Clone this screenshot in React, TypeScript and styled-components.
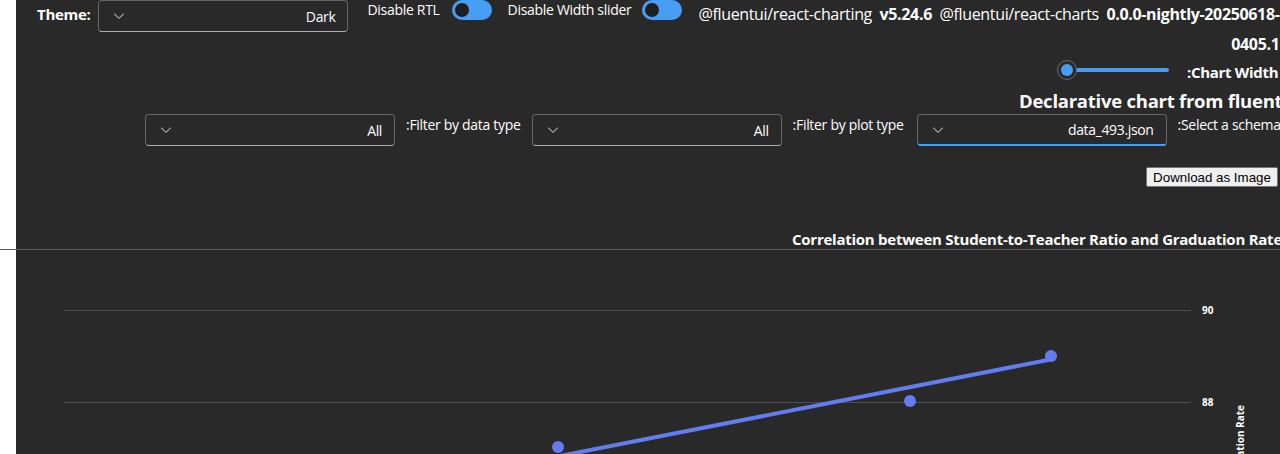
import React from "react";
import styled, { createGlobalStyle } from "styled-components";

const Global = createGlobalStyle`
  html, body { margin: 0; padding: 0; background: #ffffff; }
  body { font-family: "Segoe UI", "Open Sans", sans-serif; }
  #root { width: 1280px; height: 454px; }
`;

const Viewport = styled.div`
  width: 1280px;
  height: 454px;
  overflow: hidden;
  position: relative;
`;

const Page = styled.div`
  margin-left: 16px;
  height: 454px;
  background: #292929;
  color: #ffffff;
  font-family: "Segoe UI", "Open Sans", sans-serif;
`;

const TopRow = styled.div`
  display: flex;
  align-items: flex-start;
  padding-left: 21px;
  white-space: nowrap;
`;

const BoldLabel = styled.span<{ $mt?: number }>`
  font-size: 15px;
  font-weight: 700;
  letter-spacing: -0.3px;
  line-height: 20px;
  margin-top: ${(p) => p.$mt ?? 0}px;
`;

const PlainLabel = styled.span<{ $ml?: number; $mt?: number }>`
  font-size: 14px;
  letter-spacing: -0.3px;
  line-height: 20px;
  margin-left: ${(p) => p.$ml ?? 0}px;
  margin-top: ${(p) => p.$mt ?? 0}px;
`;

const Dropdown = styled.div<{ $focused?: boolean; $ml?: number }>`
  box-sizing: border-box;
  width: 250px;
  height: 32px;
  flex: none;
  margin-left: ${(p) => p.$ml ?? 0}px;
  border: 1px solid #666666;
  border-bottom: ${(p) => (p.$focused ? "2px solid #479ef5" : "1px solid #adadad")};
  border-radius: 4px;
  background: #292929;
  display: flex;
  align-items: center;
  justify-content: space-between;
  padding: 0 12px 0 13px;
`;

const DropValue = styled.span`
  font-size: 14px;
  letter-spacing: -0.35px;
  color: #ffffff;
`;

const Chevron = () => (
  <svg width="14" height="14" viewBox="0 0 14 14" fill="none">
    <path d="M2.5 5 L7 9.3 L11.5 5" stroke="#9e9e9e" strokeWidth="1.1" strokeLinecap="round" strokeLinejoin="round" />
  </svg>
);

const Toggle = styled.div<{ $ml?: number }>`
  box-sizing: border-box;
  width: 40px;
  height: 20px;
  flex: none;
  margin-left: ${(p) => p.$ml ?? 0}px;
  border-radius: 10px;
  background: #479ef5;
  display: flex;
  align-items: center;
  padding-left: 3px;
`;

const Knob = styled.div`
  width: 14px;
  height: 14px;
  border-radius: 50%;
  background: #1f1f1f;
`;

const Versions = styled.div`
  flex: none;
  margin-left: 16px;
  margin-top: -1px;
  font-size: 16px;
  letter-spacing: -0.35px;
  line-height: 30px;
  text-align: right;
  white-space: nowrap;
`;

const Strong = styled.b`
  font-weight: 700;
`;

const SliderRow = styled.div`
  display: flex;
  align-items: center;
  height: 22px;
  padding-left: 1041px;
  white-space: nowrap;
`;

const SliderTrack = styled.div`
  position: relative;
  width: 112px;
  height: 22px;
  flex: none;
  display: flex;
  align-items: center;
`;

const TrackBar = styled.div`
  margin-left: 10px;
  width: 102px;
  height: 4px;
  border-radius: 2px;
  background: #479ef5;
`;

const Thumb = styled.div`
  position: absolute;
  left: 0;
  top: 1px;
  box-sizing: border-box;
  width: 20px;
  height: 20px;
  border-radius: 50%;
  border: 1px solid #6b6b6b;
  background: #292929;
  display: flex;
  align-items: center;
  justify-content: center;
  &::after {
    content: "";
    width: 12px;
    height: 12px;
    border-radius: 50%;
    background: #479ef5;
  }
`;

const WidthLabel = styled(BoldLabel)`
  margin-left: 18px;
  margin-top: 4px;
`;

const HeadingRow = styled.div`
  margin-top: 8px;
  padding-left: 1003px;
  white-space: nowrap;
  font-size: 18.5px;
  font-weight: 700;
  letter-spacing: -0.25px;
  line-height: 24px;
`;

const FilterRow = styled.div`
  display: flex;
  align-items: flex-start;
  margin-top: 1px;
  padding-left: 129px;
  white-space: nowrap;
`;

const ButtonRow = styled.div`
  margin-top: 21px;
  padding-left: 1130px;
  display: flex;
`;

const DownloadButton = styled.button`
  box-sizing: border-box;
  height: 20px;
  width: 132px;
  padding: 0 6px;
  font-family: "Liberation Sans", Arial, sans-serif;
  font-size: 13.33px;
  color: #000000;
  background: #efefef;
  border: 1px solid #767676;
  border-radius: 2px;
  white-space: nowrap;
`;

const ChartTitle = styled.div`
  margin-top: 42px;
  padding-left: 776px;
  white-space: nowrap;
  font-size: 15px;
  font-weight: 700;
  letter-spacing: -0.25px;
  line-height: 20px;
`;

const Divider = styled.div`
  margin-left: -16px;
  width: 1280px;
  height: 1px;
  background: #5c5c5c;
`;

const ChartSvg = styled.svg`
  display: block;
`;

const Chart = () => {
  const pts = [
    [542, 197],
    [894, 151],
    [1035, 106],
  ];
  return (
    <ChartSvg width={1264} height={204} viewBox="0 0 1264 204">
      <line x1={48} y1={60.5} x2={1175} y2={60.5} stroke="#4d4d4d" strokeWidth={1} />
      <line x1={48} y1={152.5} x2={1175} y2={152.5} stroke="#4d4d4d" strokeWidth={1} />
      <text x={1186} y={64} fill="#ffffff" fontSize="10" fontWeight="700" fontFamily="'Segoe UI','Open Sans',sans-serif">90</text>
      <text x={1186} y={156} fill="#ffffff" fontSize="10" fontWeight="700" fontFamily="'Segoe UI','Open Sans',sans-serif">88</text>
      <text
        x={0}
        y={0}
        transform="translate(1228,155) rotate(-90)"
        textAnchor="end"
        fill="#ffffff"
        fontSize="10"
        fontWeight="700"
        fontFamily="'Segoe UI','Open Sans',sans-serif"
      >
        Graduation Rate
      </text>
      <line x1={500} y1={214.6} x2={1032} y2={110} stroke="#637cef" strokeWidth={4} strokeLinecap="round" />
      {pts.map(([x, y], i) => (
        <circle key={i} cx={x} cy={y} r={6} fill="#637cef" />
      ))}
    </ChartSvg>
  );
};

export default function App() {
  return (
    <>
      <Global />
      <Viewport>
        <Page>
          <TopRow>
            <BoldLabel $mt={4}>Theme:</BoldLabel>
            <Dropdown $ml={8}>
              <Chevron />
              <DropValue>Dark</DropValue>
            </Dropdown>
            <PlainLabel $ml={19} $mt={0}>Disable RTL</PlainLabel>
            <Toggle $ml={12}>
              <Knob />
            </Toggle>
            <PlainLabel $ml={16} $mt={0}>Disable Width slider</PlainLabel>
            <Toggle $ml={11}>
              <Knob />
            </Toggle>
            <Versions>
              @fluentui/react-charting&nbsp; <Strong>v5.24.6</Strong>&nbsp; @fluentui/react-charts&nbsp;{" "}
              <Strong>0.0.0-nightly-20250618-</Strong>
              <br />
              <Strong>0405.1</Strong>
            </Versions>
          </TopRow>
          <SliderRow>
            <SliderTrack>
              <TrackBar />
              <Thumb />
            </SliderTrack>
            <WidthLabel>:Chart Width</WidthLabel>
          </SliderRow>
          <HeadingRow>Declarative chart from fluentui</HeadingRow>
          <FilterRow>
            <Dropdown>
              <Chevron />
              <DropValue>All</DropValue>
            </Dropdown>
            <PlainLabel $ml={11} $mt={1}>:Filter by data type</PlainLabel>
            <Dropdown $ml={11}>
              <Chevron />
              <DropValue>All</DropValue>
            </Dropdown>
            <PlainLabel $ml={11} $mt={1}>:Filter by plot type</PlainLabel>
            <Dropdown $ml={13} $focused>
              <Chevron />
              <DropValue>data_493.json</DropValue>
            </Dropdown>
            <PlainLabel $ml={11} $mt={1}>:Select a schema</PlainLabel>
          </FilterRow>
          <ButtonRow>
            <DownloadButton>Download as Image</DownloadButton>
          </ButtonRow>
          <ChartTitle>Correlation between Student-to-Teacher Ratio and Graduation Rate</ChartTitle>
          <Divider />
          <Chart />
        </Page>
      </Viewport>
    </>
  );
}
